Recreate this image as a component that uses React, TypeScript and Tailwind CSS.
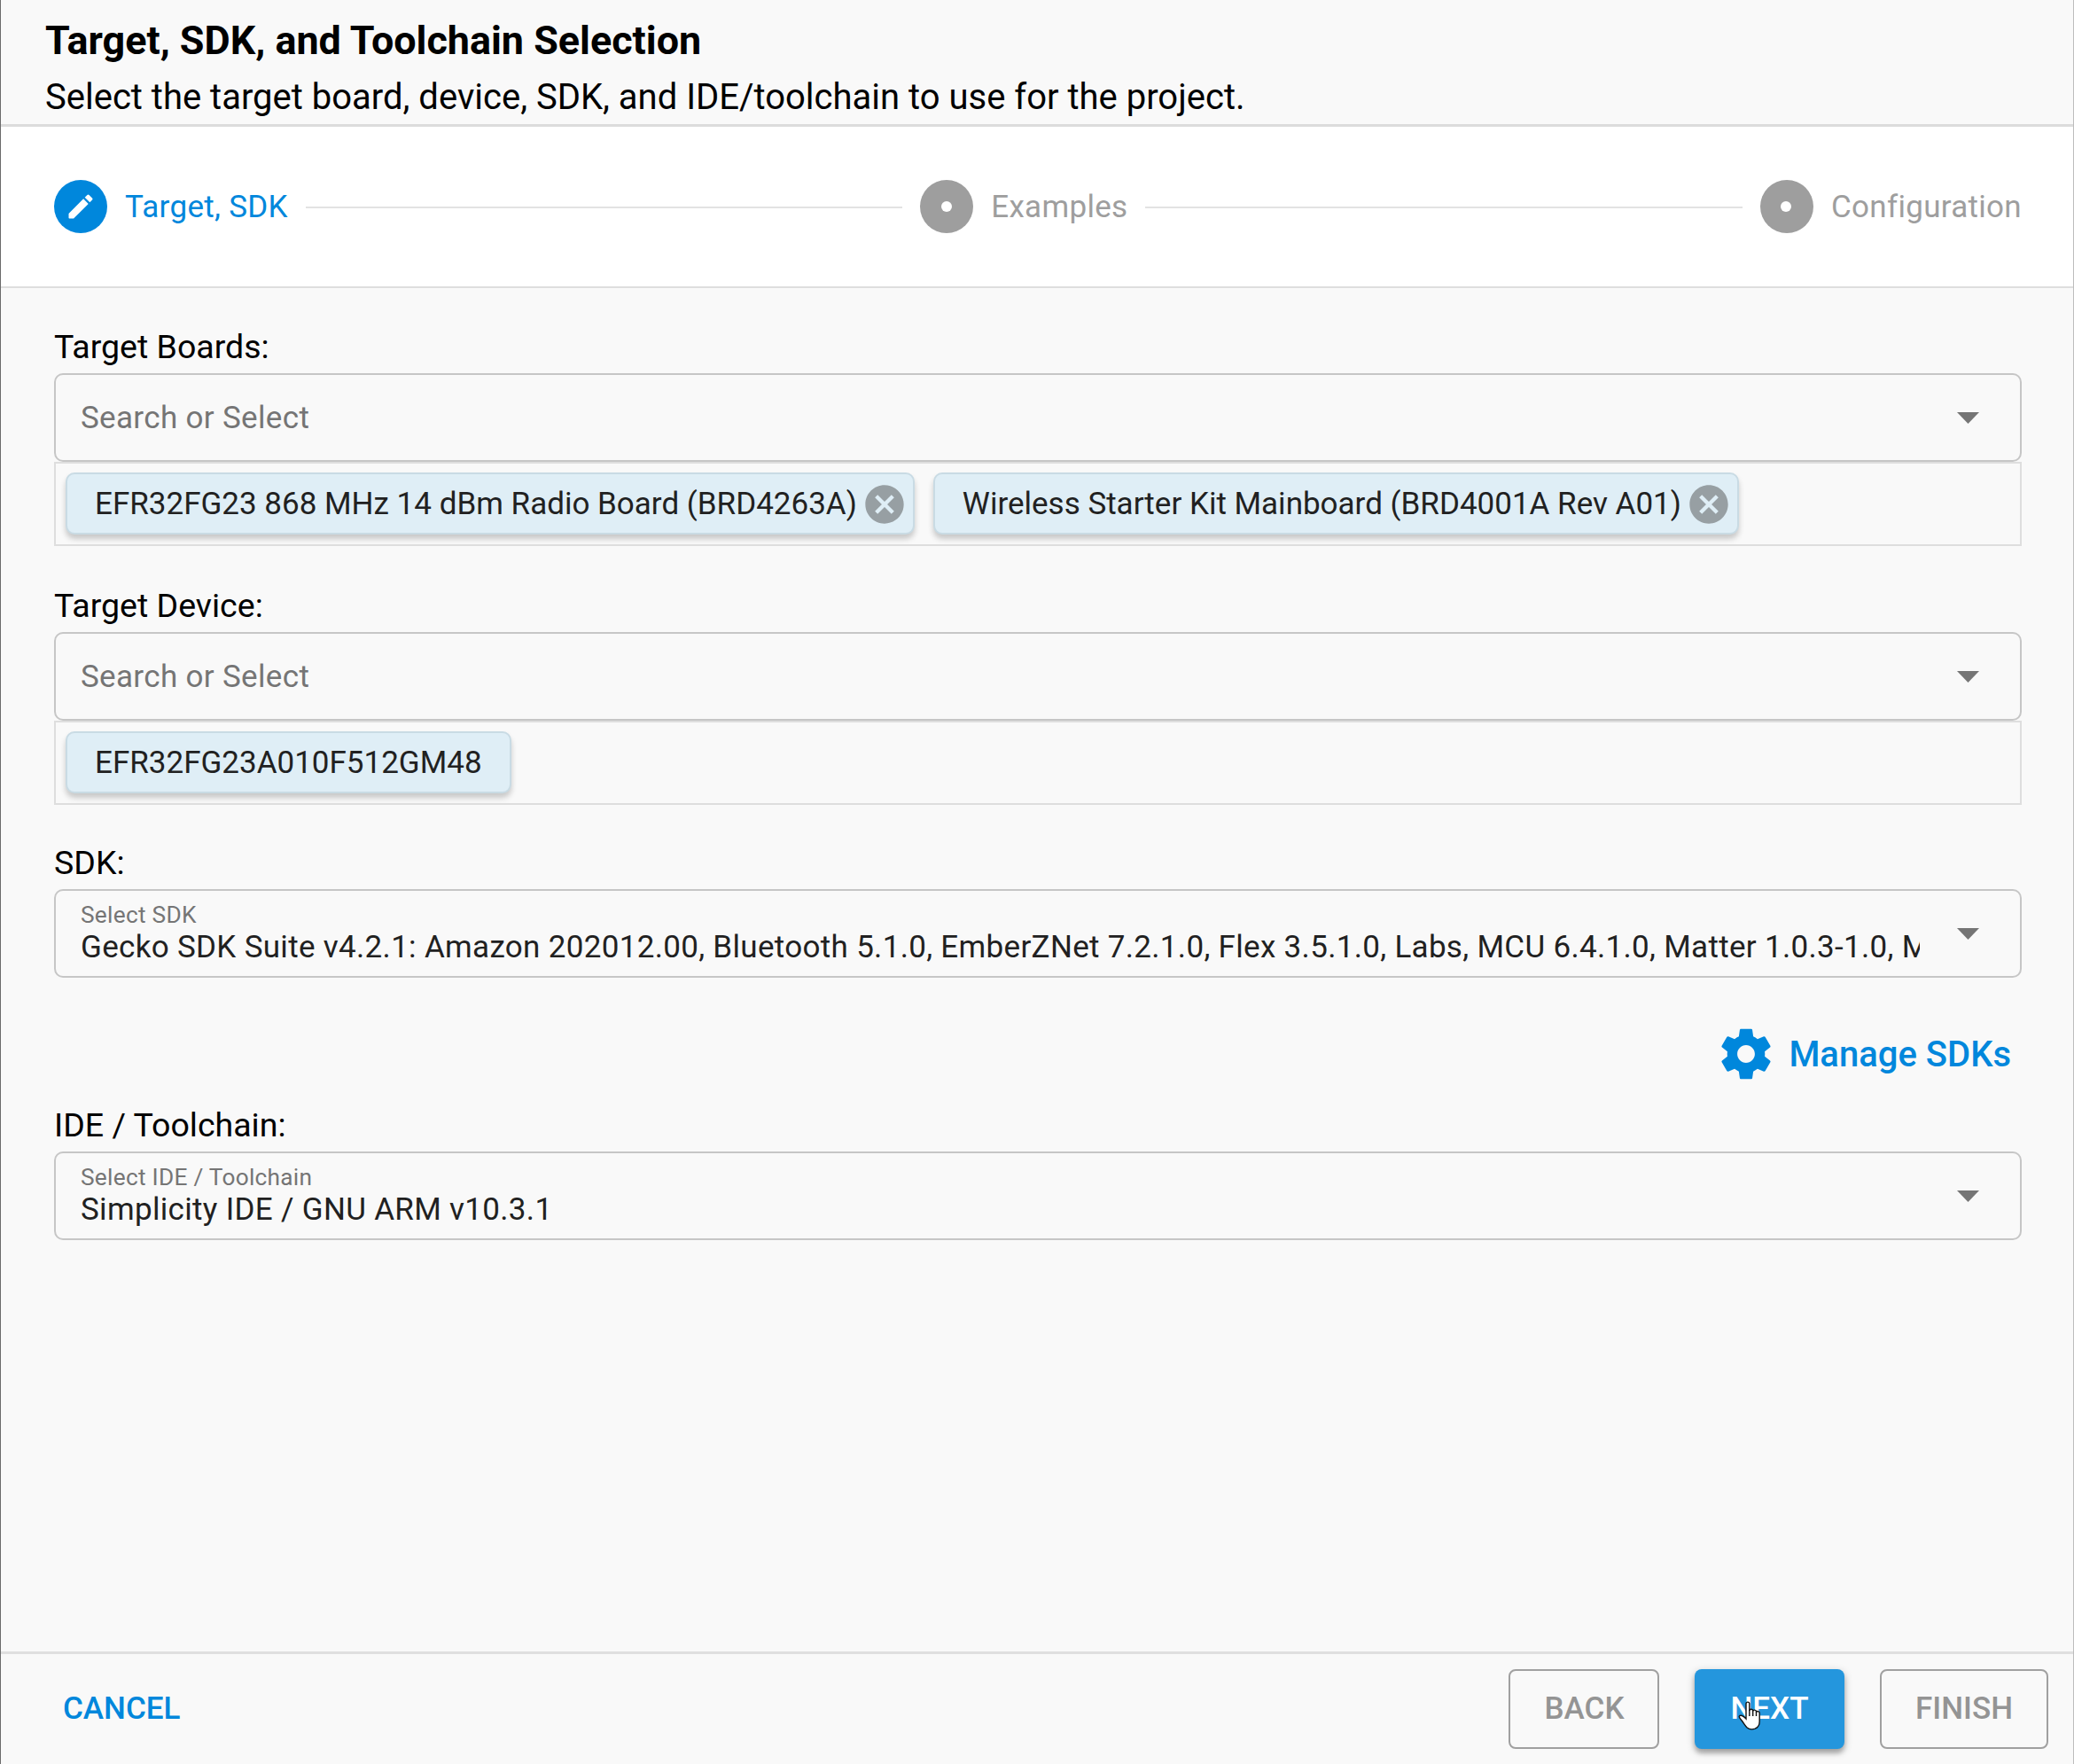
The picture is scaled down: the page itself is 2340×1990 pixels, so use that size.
import React from "react";

const Caret = () => (
  <svg className="h-[13px] w-[25px] shrink-0" viewBox="0 0 25 13" fill="#757575">
    <path d="M0 0h25L12.500 13z" />
  </svg>
);

const DotStep = ({ label }: { label: string }) => (
  <div className="flex items-center">
    <div className="flex h-[60px] w-[60px] items-center justify-center rounded-full bg-[#9e9e9e]">
      <div className="mr-px h-[12px] w-[12px] rounded-full bg-white" />
    </div>
    <span className="ml-5 whitespace-nowrap text-[35px] leading-[35px] tracking-[0.300px] text-[#9e9e9e]">{label}</span>
  </div>
);

const Line = () => <div className="mx-5 mt-[1px] h-[2px] flex-1 bg-[#e3e3e3]" />;

const Label = ({ children }: { children: React.ReactNode }) => (
  <div className="text-[37.500px] leading-[60px] text-black">{children}</div>
);

const Field = ({ label, value }: { label: string; value?: string }) => (
  <div className="flex h-[100px] items-center rounded-[10px] border-2 border-[#c6c6c6] pl-7 pr-[46px]">
    <div className="min-w-0 flex-1 pr-[42px]">
      {value ? (
        <div className="overflow-hidden">
          <div className="text-[26.250px] leading-[30px] tracking-[0.270px] text-[#757575]">{label}</div>
          <div className="overflow-hidden whitespace-nowrap text-[35px] leading-[43px] tracking-[0.315px] text-[#212121]">{value}</div>
        </div>
      ) : (
        <div className="mt-px text-[35px] leading-[44px] tracking-[0.330px] text-[#757575]">{label}</div>
      )}
    </div>
    <Caret />
  </div>
);

const Chip = ({ text, closable }: { text: string; closable?: boolean }) => (
  <div
    className={
      "flex h-[70px] items-center rounded-[10px] border-2 border-[#c9dbe4] bg-[#dfeef6] pl-[31px] shadow-[0_5px_6px_rgba(0,0,0,0.2)] " +
      (closable ? "pr-[6px]" : "pr-[31px]")
    }
  >
    <span className="mt-px whitespace-nowrap text-[35px] leading-[44px] text-[#212121]">{text}</span>
    {closable && (
      <svg className="ml-[5px] mt-px h-[52px] w-[52px]" viewBox="0 0 24 24" fill="#979fa3">
        <path d="M12 2C6.470 2 2 6.470 2 12s4.470 10 10 10 10-4.470 10-10S17.530 2 12 2zm5 13.590L15.590 17 12 13.410 8.410 17 7 15.590 10.590 12 7 8.410 8.410 7 12 10.590 15.590 7 17 8.410 13.410 12 17 15.590z" />
      </svg>
    )}
  </div>
);

const ChipRow = ({ children }: { children: React.ReactNode }) => (
  <div className="flex h-[95px] gap-[21px] border-2 border-[#dedede] pl-[11px] pt-[10px]">{children}</div>
);

export default function App() {
  return (
    <div className="flex h-[1990px] w-[2340px] flex-col overflow-hidden border-l border-r border-l-[#6b6b6b] border-r-[#bdbdbd] bg-[#f9f9f9] font-['Roboto',sans-serif]">
      <header className="h-[143px] border-b-[3px] border-[#dcdcdc] pl-[50px] pt-[15px]">
        <h1 className="text-[44.900px] font-bold leading-[62px] text-black">Target, SDK, and Toolchain Selection</h1>
        <p className="mt-px text-[40px] leading-[64px] text-black">
          Select the target board, device, SDK, and IDE/toolchain to use for the project.
        </p>
      </header>

      <nav className="flex h-[182px] items-center border-b-2 border-[#dedede] bg-white pl-[60px] pr-[58px]">
        <div className="flex items-center">
          <div className="flex h-[60px] w-[60px] items-center justify-center rounded-full bg-[#0087dc]">
            <svg className="h-[36px] w-[36px]" viewBox="0 0 24 24" fill="#fff">
              <path d="M3 17.460v3.040c0 .280.220.500.500.500h3.040c.130 0 .260-.050.350-.150L17.810 9.940l-3.750-3.750L3.150 17.100c-.100.100-.150.220-.150.360zM20.710 7.040a.996.996 0 0 0 0-1.410l-2.340-2.340a.996.996 0 0 0-1.410 0l-1.830 1.830 3.750 3.750 1.830-1.830z" />
            </svg>
          </div>
          <span className="ml-5 whitespace-nowrap text-[35px] leading-[35px] tracking-[0.300px] text-[#0087dc]">Target, SDK</span>
        </div>
        <Line />
        <DotStep label="Examples" />
        <Line />
        <DotStep label="Configuration" />
      </nav>

      <main className="flex-1 pl-[60px] pr-[58px] pt-[36px]">
        <Label>Target Boards:</Label>
        <Field label="Search or Select" />
        <ChipRow>
          <Chip text="EFR32FG23 868 MHz 14 dBm Radio Board (BRD4263A)" closable />
          <Chip text="Wireless Starter Kit Mainboard (BRD4001A Rev A01)" closable />
        </ChipRow>

        <div className="mt-[37px]">
          <Label>Target Device:</Label>
          <Field label="Search or Select" />
          <ChipRow>
            <Chip text="EFR32FG23A010F512GM48" />
          </ChipRow>
        </div>

        <div className="mt-[35px]">
          <Label>SDK:</Label>
          <Field
            label="Select SDK"
            value="Gecko SDK Suite v4.2.1: Amazon 202012.00, Bluetooth 5.1.0, EmberZNet 7.2.1.0, Flex 3.5.1.0, Labs, MCU 6.4.1.0, Matter 1.0.3-1.0, Micrium OS"
          />
        </div>

        <div className="mt-[52px] flex h-[68px] items-center justify-end pr-[12px]">
          <svg className="h-[68px] w-[68px]" viewBox="0 0 24 24" fill="#0087dc">
            <path d="M19.430 12.980c.040-.320.070-.640.070-.980s-.030-.660-.070-.980l2.110-1.650c.190-.150.240-.420.120-.640l-2-3.460c-.120-.220-.390-.300-.610-.220l-2.490 1c-.520-.400-1.080-.730-1.690-.980l-.380-2.650A.488.488 0 0 0 14 2h-4c-.250 0-.460.180-.490.420l-.380 2.650c-.610.250-1.170.590-1.690.980l-2.490-1c-.230-.090-.490 0-.610.220l-2 3.460c-.130.220-.070.490.120.640l2.110 1.650c-.040.320-.070.650-.070.980s.030.660.070.980l-2.110 1.650c-.190.150-.240.420-.120.640l2 3.460c.120.220.390.300.610.220l2.490-1c.520.400 1.080.730 1.690.980l.380 2.650c.030.240.240.420.490.420h4c.250 0 .460-.180.490-.420l.380-2.650c.610-.250 1.170-.590 1.690-.980l2.490 1c.230.090.490 0 .610-.220l2-3.460c.120-.220.070-.490-.120-.640l-2.110-1.650zM12 15.500c-1.930 0-3.500-1.570-3.500-3.500s1.570-3.500 3.500-3.500 3.500 1.570 3.500 3.500-1.570 3.500-3.500 3.500z" />
          </svg>
          <span className="ml-[14px] mt-px text-[40px] font-medium leading-[40px] text-[#0087dc]">Manage SDKs</span>
        </div>

        <div className="mt-[16px]">
          <Label>IDE / Toolchain:</Label>
          <Field label="Select IDE / Toolchain" value="Simplicity IDE / GNU ARM v10.3.1" />
        </div>
      </main>

      <footer className="flex h-[127px] items-start border-t-[3px] border-[#dfdfdf] pl-[70px] pr-[28px] pt-[17px] text-[35px] font-medium">
        <button className="h-[90px] text-[#0087dc]">CANCEL</button>
        <button className="ml-auto h-[90px] w-[170px] rounded-[8px] border-2 border-[#a0a0a0] pl-px text-[#949494]">BACK</button>
        <button className="relative ml-10 h-[90px] w-[169px] rounded-[8px] bg-[#2496dd] text-white shadow-[0_3px_10px_rgba(0,0,0,0.25),0_5px_5px_rgba(0,0,0,0.2)]">
          NEXT
          <svg className="absolute left-[49px] top-[36px] h-[33px] w-[26px]" viewBox="0 0 26 33">
            <path
              d="M9 19V3a1.900 1.900 0 0 1 3.800 0v8c0-2.500 3.900-2.300 3.900 0v.5c.2-2 3.800-1.800 3.800.5v.5c.4-1.500 3.700-1.200 3.700 1V23c0 3-1 6.500-5 8.200-3 1-7 .6-9-1.200-2.500-2.500-4-5.500-6.500-8.500C1.500 19 .5 17.200 1.800 16.500c2-1 4.700.7 7.200 3.500z"
              fill="#fff"
              stroke="#111"
              strokeWidth="1.400"
            />
            <path d="M12.800 10v7M16.700 11v6M20.500 12v5" stroke="#111" strokeWidth="1.400" />
          </svg>
        </button>
        <button className="ml-10 h-[90px] w-[190px] rounded-[8px] border-2 border-[#a0a0a0] text-[#949494]">FINISH</button>
      </footer>
    </div>
  );
}
